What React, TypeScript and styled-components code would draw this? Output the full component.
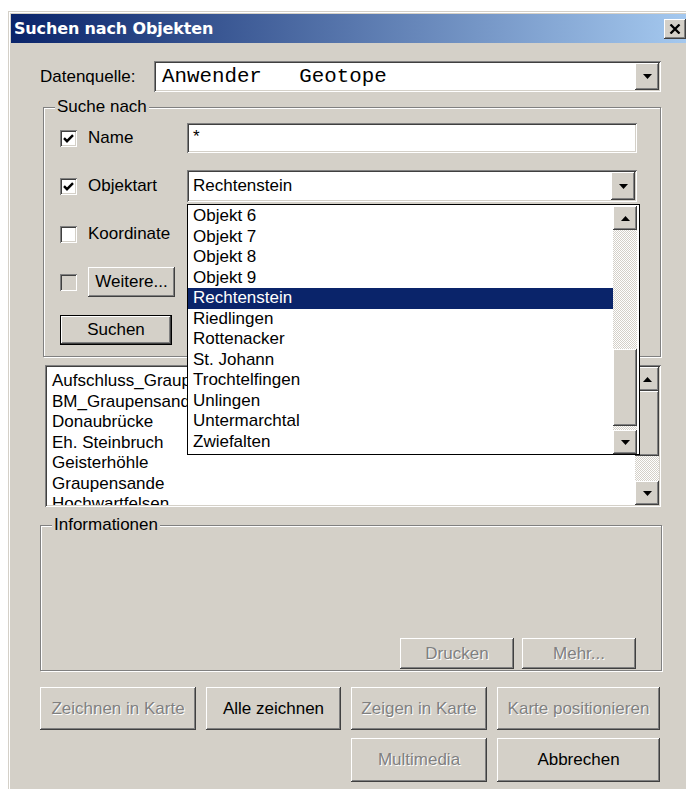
import styled, { createGlobalStyle, css } from "styled-components";

const FACE = "#d4d0c8";
const SHADOW = "#808080";
const DARK = "#404040";
const NAVY = "#0a246a";

const GlobalStyle = createGlobalStyle`
  html, body {
    margin: 0;
    padding: 0;
    background: #fff;
    overflow: hidden;
  }
  body {
    font-family: "Liberation Sans", Arial, sans-serif;
    font-size: 17px;
    color: #000;
  }
`;

const raised = css`
  background: ${FACE};
  box-shadow: inset -1px -1px ${DARK}, inset 1px 1px #fff,
    inset -2px -2px ${SHADOW}, inset 2px 2px ${FACE};
`;

const sunken = css`
  background: #fff;
  box-shadow: inset 1px 1px ${SHADOW}, inset -1px -1px #fff,
    inset 2px 2px ${DARK}, inset -2px -2px ${FACE};
`;

const etched = css`
  border: 1px solid ${SHADOW};
  box-shadow: inset 1px 1px #fff, 1px 1px 0 #fff;
`;

const objectTypes = [
  "Objekt 6",
  "Objekt 7",
  "Objekt 8",
  "Objekt 9",
  "Rechtenstein",
  "Riedlingen",
  "Rottenacker",
  "St. Johann",
  "Trochtelfingen",
  "Unlingen",
  "Untermarchtal",
  "Zwiefalten",
];

const results = [
  "Aufschluss_Graupensande",
  "BM_Graupensande",
  "Donaubrücke",
  "Eh. Steinbruch",
  "Geisterhöhle",
  "Graupensande",
  "Hochwartfelsen",
];

function Arrow({ up }: { up?: boolean }) {
  return (
    <svg width="9" height="5" viewBox="0 0 9 5">
      <path d={up ? "M0 5h9L4.5 0z" : "M0 0h9L4.5 5z"} fill="#000" />
    </svg>
  );
}

function Check({ checked, disabled }: { checked?: boolean; disabled?: boolean }) {
  return (
    <CheckBox $disabled={disabled}>
      {checked && (
        <svg width="11" height="9" viewBox="0 0 11 9">
          <path d="M1 4.2l3 3L10 1.2" stroke="#000" strokeWidth="2.4" fill="none" />
        </svg>
      )}
    </CheckBox>
  );
}

function VScroll({ before, thumb }: { before?: number; thumb: number }) {
  return (
    <ScrollCol>
      <ArrowButton>
        <Arrow up />
      </ArrowButton>
      {before ? <Track $size={before} /> : null}
      <Thumb $size={thumb} />
      <Track />
      <ArrowButton>
        <Arrow />
      </ArrowButton>
    </ScrollCol>
  );
}

export default function App() {
  return (
    <>
      <GlobalStyle />
      <Window>
        <TitleBar>
          <Title>Suchen nach Objekten</Title>
          <CloseButton>
            <svg width="12" height="10" viewBox="0 0 12 10">
              <path d="M1.5 0.5l9 9M10.5 0.5l-9 9" stroke="#000" strokeWidth="2.3" />
            </svg>
          </CloseButton>
        </TitleBar>

        <Body>
          <SourceRow>
            <SourceLabel>Datenquelle:</SourceLabel>
            <Combo $width={507} $height={31}>
              <MonoText>Anwender   Geotope</MonoText>
              <DropButton>
                <Arrow />
              </DropButton>
            </Combo>
          </SourceRow>

          <SearchGroup>
            <Legend>Suche nach</Legend>
            <SearchGrid>
              <Check checked />
              <CheckLabel>Name</CheckLabel>
              <TextField>*</TextField>

              <Check checked />
              <CheckLabel>Objektart</CheckLabel>
              <Combo $width={450} $height={32}>
                <ComboText>Rechtenstein</ComboText>
                <DropButton>
                  <Arrow />
                </DropButton>
                <Popup>
                  <PopupItems>
                    {objectTypes.map((name) => (
                      <Item key={name} $selected={name === "Rechtenstein"}>
                        {name}
                      </Item>
                    ))}
                  </PopupItems>
                  <VScroll before={119} thumb={77} />
                </Popup>
              </Combo>

              <Check />
              <CheckLabel>Koordinate</CheckLabel>
              <span />

              <Check disabled />
              <Button $width={87} $height={30}>
                Weitere...
              </Button>
              <span />

              <SearchButton $width={112} $height={30} $default>
                Suchen
              </SearchButton>
            </SearchGrid>
          </SearchGroup>

          <ResultList>
            <ResultItems>
              {results.map((name) => (
                <Item key={name}>{name}</Item>
              ))}
            </ResultItems>
            <VScroll thumb={65} />
          </ResultList>

          <InfoGroup>
            <Legend>Informationen</Legend>
            <Button $width={114} $height={31} $disabled>
              Drucken
            </Button>
            <Button $width={114} $height={31} $disabled>
              Mehr...
            </Button>
          </InfoGroup>

          <ActionGrid>
            <Button $disabled>Zeichnen in Karte</Button>
            <Button>Alle zeichnen</Button>
            <Button $disabled>Zeigen in Karte</Button>
            <Button $disabled>Karte positionieren</Button>
            <Button $disabled $col={3}>
              Multimedia
            </Button>
            <Button>Abbrechen</Button>
          </ActionGrid>
        </Body>
      </Window>
    </>
  );
}

const Window = styled.div`
  margin: 11px 0 0 8px;
  width: 684px;
  height: 800px;
  padding: 3px 0 0 3px;
  box-sizing: border-box;
  background: ${FACE};
  box-shadow: inset 1px 1px ${FACE}, inset 2px 2px #fff;
`;

const TitleBar = styled.div`
  height: 29px;
  display: flex;
  align-items: center;
  padding-left: 3px;
  background: linear-gradient(to right, ${NAVY}, #a6caf0);
`;

const Title = styled.span`
  font-family: "DejaVu Sans", Verdana, sans-serif;
  font-weight: bold;
  font-size: 16px;
  letter-spacing: -0.15px;
  color: #fff;
`;

const CloseButton = styled.div`
  ${raised}
  margin-left: auto;
  margin-right: 6px;
  width: 22px;
  height: 20px;
  display: flex;
  align-items: center;
  justify-content: center;
`;

const Body = styled.div`
  padding-left: 29px;
`;

const SourceRow = styled.div`
  margin-top: 18px;
  display: flex;
  align-items: center;
`;

const SourceLabel = styled.span`
  width: 114px;
`;

const Combo = styled.div<{ $width: number; $height: number }>`
  ${sunken}
  position: relative;
  width: ${(p) => p.$width}px;
  height: ${(p) => p.$height}px;
  box-sizing: border-box;
  padding: 2px;
  display: flex;
  align-items: center;
`;

const MonoText = styled.span`
  flex: 1;
  padding-left: 6px;
  font-family: "Liberation Mono", "Courier New", monospace;
  font-size: 20.8px;
  white-space: pre;
`;

const ComboText = styled.span`
  flex: 1;
  padding-left: 4px;
`;

const DropButton = styled.div`
  ${raised}
  width: 24px;
  align-self: stretch;
  display: flex;
  align-items: center;
  justify-content: center;
`;

const SearchGroup = styled.div`
  ${etched}
  position: relative;
  margin: 15px 0 0 3px;
  width: 618px;
  height: 250px;
  box-sizing: border-box;
  padding: 6px 0 0 16px;
`;

const Legend = styled.span`
  position: absolute;
  left: 11px;
  top: -11px;
  padding: 0 2px;
  line-height: 20px;
  background: ${FACE};
`;

const SearchGrid = styled.div`
  display: grid;
  grid-template-columns: 28px 99px 450px;
  grid-auto-rows: 48px;
  align-items: center;
`;

const CheckBox = styled.div<{ $disabled?: boolean }>`
  ${sunken}
  background: ${(p) => (p.$disabled ? FACE : "#fff")};
  width: 17px;
  height: 17px;
  display: flex;
  align-items: center;
  justify-content: center;
`;

const CheckLabel = styled.span``;

const TextField = styled.div`
  ${sunken}
  height: 30px;
  box-sizing: border-box;
  padding: 4px 6px;
  line-height: 20px;
`;

const Button = styled.div<{
  $width?: number;
  $height?: number;
  $disabled?: boolean;
  $default?: boolean;
  $col?: number;
}>`
  ${raised}
  ${(p) => (p.$width ? `width: ${p.$width}px;` : "")}
  ${(p) => (p.$height ? `height: ${p.$height}px;` : "")}
  ${(p) => (p.$col ? `grid-column: ${p.$col};` : "")}
  box-sizing: border-box;
  display: flex;
  align-items: center;
  justify-content: center;
  white-space: nowrap;
  color: ${(p) => (p.$disabled ? SHADOW : "#000")};
  text-shadow: ${(p) => (p.$disabled ? "1px 1px 0 #fff" : "none")};
  ${(p) =>
    p.$default &&
    css`
      border: 1px solid #000;
    `}
`;

const SearchButton = styled(Button)`
  grid-column: 1 / span 2;
`;

const Popup = styled.div`
  position: absolute;
  left: 0;
  top: calc(100% + 2px);
  width: 453px;
  height: 251px;
  box-sizing: border-box;
  border: 1px solid #000;
  padding: 1px 2px 0 0;
  background: #fff;
  display: flex;
  z-index: 10;
`;

const PopupItems = styled.div`
  flex: 1;
  overflow: hidden;
`;

const Item = styled.div<{ $selected?: boolean }>`
  height: 20.5px;
  line-height: 20.5px;
  padding-left: 5px;
  white-space: nowrap;
  background: ${(p) => (p.$selected ? NAVY : "transparent")};
  color: ${(p) => (p.$selected ? "#fff" : "#000")};
`;

const ScrollCol = styled.div`
  width: 24px;
  display: flex;
  flex-direction: column;
`;

const ArrowButton = styled.div`
  ${raised}
  flex: 0 0 24px;
  display: flex;
  align-items: center;
  justify-content: center;
`;

const Track = styled.div<{ $size?: number }>`
  flex: ${(p) => (p.$size ? `0 0 ${p.$size}px` : "1")};
  background-image: repeating-conic-gradient(${FACE} 0% 25%, #fff 0% 50%);
  background-size: 2px 2px;
`;

const Thumb = styled.div<{ $size: number }>`
  ${raised}
  flex: 0 0 ${(p) => p.$size}px;
`;

const ResultList = styled.div`
  ${sunken}
  margin: 8px 0 0 5px;
  width: 616px;
  height: 142px;
  box-sizing: border-box;
  padding: 2px;
  display: flex;
  overflow: hidden;
`;

const ResultItems = styled.div`
  flex: 1;
  padding-top: 4px;
  overflow: hidden;
`;

const InfoGroup = styled.div`
  ${etched}
  position: relative;
  margin-top: 18px;
  width: 622px;
  height: 146px;
  box-sizing: border-box;
  padding: 0 25px 1px 0;
  display: flex;
  justify-content: flex-end;
  align-items: flex-end;
  gap: 8px;
`;

const ActionGrid = styled.div`
  margin-top: 16px;
  display: grid;
  grid-template-columns: 156px 135px 136px 163px;
  grid-template-rows: 43px 44px;
  column-gap: 10px;
  row-gap: 8px;
`;
